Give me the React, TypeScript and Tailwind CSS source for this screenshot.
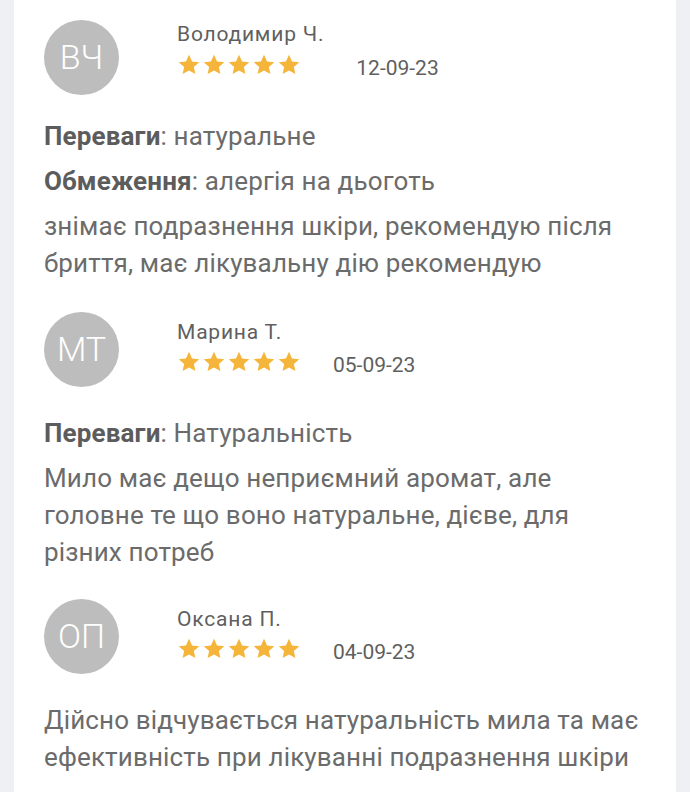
import React from "react";

type Review = {
  initials: string;
  name: string;
  date: string;
  pros?: string;
  cons?: string;
  text: string;
};

const reviews: Review[] = [
  {
    initials: "ВЧ",
    name: "Володимир Ч.",
    date: "12-09-23",
    pros: "натуральне",
    cons: "алергія на дьоготь",
    text: "знімає подразнення шкіри, рекомендую після бриття, має лікувальну дію рекомендую",
  },
  {
    initials: "МТ",
    name: "Марина Т.",
    date: "05-09-23",
    pros: "Натуральність",
    text: "Мило має дещо неприємний аромат, але головне те що воно натуральне, дієве, для різних потреб",
  },
  {
    initials: "ОП",
    name: "Оксана П.",
    date: "04-09-23",
    text: "Дійсно відчувається натуральність мила та має ефективність при лікуванні подразнення шкіри",
  },
];

function Star() {
  return (
    <svg viewBox="0 0 24 24" className="w-[24px] h-[24px]" fill="#f5b53a">
      <path d="M12 1.8l3.05 6.6 7.2.75-5.4 4.85 1.55 7.1L12 17.45 5.6 21.1l1.55-7.1-5.4-4.85 7.2-.75z" />
    </svg>
  );
}

function ReviewItem({ review, first }: { review: Review; first: boolean }) {
  return (
    <div className={first ? "pt-[28px] pb-[2px]" : "pt-[28px]"}>
      <div className="flex items-start">
        <div className="w-[75px] h-[75px] rounded-full bg-[#bdbdbd] flex items-center justify-center text-white text-[34px] font-light shrink-0">
          {review.initials}
        </div>
        <div className={`ml-[58px] flex items-end gap-[32px] ${first ? "mt-0" : "mt-[6px]"}`}>
          <div className="flex flex-col">
            <div className="text-[21px] leading-[28px] tracking-[0.8px] text-[#5f5f5f]">{review.name}</div>
            <div className={`flex gap-[1px] ${first ? "mt-[5px]" : "mt-[4px]"}`}>
              <Star />
              <Star />
              <Star />
              <Star />
              <Star />
            </div>
          </div>
          <div className="text-[21px] leading-[24px] text-[#5f5f5f] mb-[-3px]">{review.date}</div>
        </div>
      </div>
      <div className={`${first ? "mt-[23px]" : "mt-[28px]"} flex flex-col gap-[8px] text-[26px] leading-[37px] tracking-[0.15px] text-[#6b6b6b]`}>
        {review.pros && (
          <p>
            <span className="font-bold text-[#5c5c5c]">Переваги</span>: {review.pros}
          </p>
        )}
        {review.cons && (
          <p>
            <span className="font-bold text-[#5c5c5c]">Обмеження</span>: {review.cons}
          </p>
        )}
        <p>{review.text}</p>
      </div>
    </div>
  );
}

export default function App() {
  return (
    <div className="min-h-screen bg-[#eef0f3] px-[14px]" style={{ fontFamily: "Roboto, 'Noto Sans', sans-serif" }}>
      <div className="bg-white min-h-screen pl-[30px] pr-[36px] -mt-[8px]">
        {reviews.map((r, i) => (
          <ReviewItem key={r.initials} review={r} first={i === 0} />
        ))}
      </div>
    </div>
  );
}
